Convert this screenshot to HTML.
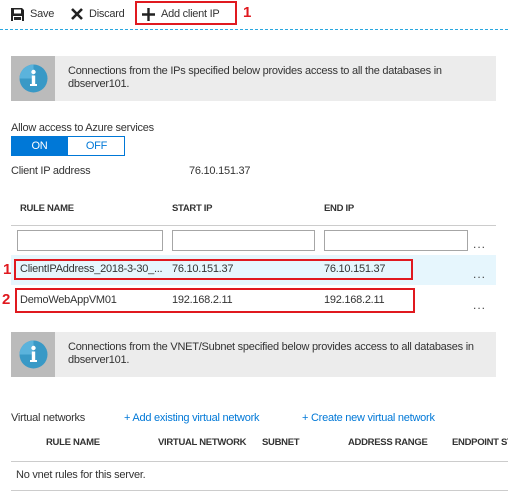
<!DOCTYPE html>
<html><head><style>
*{margin:0;padding:0;box-sizing:border-box}
body{width:508px;height:496px;background:#fff;font-family:"Segoe UI","Liberation Sans",sans-serif;font-size:11px;letter-spacing:-0.25px;color:#333;position:relative;overflow:hidden}
.a{position:absolute;white-space:nowrap;line-height:13px}
.h{font-size:9.5px;font-weight:bold;color:#333;letter-spacing:-0.3px}
.red{border:2px solid #e0191f;position:absolute}
.rn{position:absolute;color:#e0191f;font-weight:bold;font-size:15px;line-height:16px}
.inp{position:absolute;border:1px solid #a6a6a6;height:21px;top:230px;background:#fff}
.dots{position:absolute;font-size:12px;color:#444;letter-spacing:1px}
.info{position:absolute;left:11px;width:485px;height:45px;background:#ececec}
.info .ic{position:absolute;left:0;top:0;width:44px;height:45px;background:#bbbbbb}
.blue{color:#0078d7}
</style></head><body>
<svg class="a" style="left:10px;top:7px" width="15" height="15" viewBox="0 0 15 15"><path d="M1 1h11l2 2v11H1z" fill="#222"/><rect x="4" y="2.5" width="7" height="4" fill="#fff"/><rect x="3" y="9" width="9" height="5" fill="#fff"/><rect x="4" y="10" width="7" height="3" fill="#222"/></svg>
<div class="a" style="left:30px;top:8px">Save</div>
<svg class="a" style="left:71px;top:8px" width="12" height="12" viewBox="0 0 12 12"><path d="M1 1L11 11M11 1L1 11" stroke="#222" stroke-width="2.6"/></svg>
<div class="a" style="left:89px;top:8px">Discard</div>
<svg class="a" style="left:142px;top:8px" width="13" height="13" viewBox="0 0 13 13"><path d="M6.5 0V13M0 6.5H13" stroke="#222" stroke-width="2.4"/></svg>
<div class="a" style="left:161px;top:8px">Add client IP</div>
<div class="red" style="left:135px;top:1px;width:102px;height:24px"></div>
<div class="rn" style="left:243px;top:5px">1</div>
<div class="a" style="left:0;top:29px;width:508px;height:0;border-top:1px dashed #29a8e0"></div>

<div class="info" style="top:56px"><div class="ic"></div>
<svg style="position:absolute;left:8px;top:8px" width="29" height="29" viewBox="0 0 29 29"><circle cx="14.5" cy="14.5" r="14" fill="#3999c6"/><path d="M14.5 .5A14 14 0 0 0 .5 14.5L14.5 14.5z" fill="#5bb3dc"/><circle cx="14.5" cy="8" r="2.2" fill="#fff"/><rect x="12.8" y="11.5" width="3.4" height="10" fill="#fff"/><rect x="11" y="20" width="7" height="2" fill="#fff"/></svg>
<div class="a" style="left:57px;top:9px">Connections from the IPs specified below provides access to all the databases in</div>
<div class="a" style="left:57px;top:22px">dbserver101.</div></div>

<div class="a" style="left:11px;top:122px">Allow access to Azure services</div>
<div class="a" style="left:11px;top:136px;width:114px;height:20px;border:1px solid #0078d7"></div>
<div class="a" style="left:11px;top:136px;width:57px;height:20px;background:#0078d7;color:#fff;text-align:center;line-height:20px">ON</div>
<div class="a" style="left:68px;top:136px;width:57px;height:20px;color:#0078d7;text-align:center;line-height:20px">OFF</div>
<div class="a" style="left:11px;top:165px">Client IP address</div>
<div class="a" style="left:189px;top:165px">76.10.151.37</div>

<div class="a h" style="left:20px;top:202px">RULE NAME</div>
<div class="a h" style="left:172px;top:202px">START IP</div>
<div class="a h" style="left:324px;top:202px">END IP</div>
<div class="a" style="left:11px;top:225px;width:485px;border-top:1px solid #ccc"></div>
<div class="inp" style="left:17px;width:146px"></div>
<div class="inp" style="left:172px;width:143px"></div>
<div class="inp" style="left:324px;width:144px"></div>
<div class="dots" style="left:473px;top:237px">...</div>

<div class="a" style="left:11px;top:255px;width:485px;height:30px;background:#e6f6fd"></div>
<div class="a" style="left:20px;top:263px">ClientIPAddress_2018-3-30_...</div>
<div class="a" style="left:172px;top:263px">76.10.151.37</div>
<div class="a" style="left:324px;top:263px">76.10.151.37</div>
<div class="dots" style="left:473px;top:267px">...</div>
<div class="red" style="left:14px;top:259px;width:399px;height:21px"></div>
<div class="rn" style="left:3px;top:262px">1</div>

<div class="a" style="left:20px;top:294px">DemoWebAppVM01</div>
<div class="a" style="left:172px;top:294px">192.168.2.11</div>
<div class="a" style="left:324px;top:294px">192.168.2.11</div>
<div class="dots" style="left:473px;top:298px">...</div>
<div class="red" style="left:15px;top:288px;width:400px;height:25px"></div>
<div class="rn" style="left:2px;top:292px">2</div>

<div class="info" style="top:332px"><div class="ic"></div>
<svg style="position:absolute;left:8px;top:8px" width="29" height="29" viewBox="0 0 29 29"><circle cx="14.5" cy="14.5" r="14" fill="#3999c6"/><path d="M14.5 .5A14 14 0 0 0 .5 14.5L14.5 14.5z" fill="#5bb3dc"/><circle cx="14.5" cy="8" r="2.2" fill="#fff"/><rect x="12.8" y="11.5" width="3.4" height="10" fill="#fff"/><rect x="11" y="20" width="7" height="2" fill="#fff"/></svg>
<div class="a" style="left:57px;top:9px">Connections from the VNET/Subnet specified below provides access to all databases in</div>
<div class="a" style="left:57px;top:22px">dbserver101.</div></div>

<div class="a" style="left:11px;top:412px">Virtual networks</div>
<div class="a blue" style="left:124px;top:412px">+ Add existing virtual network</div>
<div class="a blue" style="left:302px;top:412px">+ Create new virtual network</div>
<div class="a h" style="left:46px;top:436px">RULE NAME</div>
<div class="a h" style="left:158px;top:436px">VIRTUAL NETWORK</div>
<div class="a h" style="left:262px;top:436px">SUBNET</div>
<div class="a h" style="left:348px;top:436px">ADDRESS RANGE</div>
<div class="a h" style="left:452px;top:436px">ENDPOINT ST</div>
<div class="a" style="left:11px;top:461px;width:497px;border-top:1px solid #ccc"></div>
<div class="a" style="left:16px;top:469px">No vnet rules for this server.</div>
<div class="a" style="left:11px;top:490px;width:497px;border-top:1px solid #ccc"></div>
</body></html>
